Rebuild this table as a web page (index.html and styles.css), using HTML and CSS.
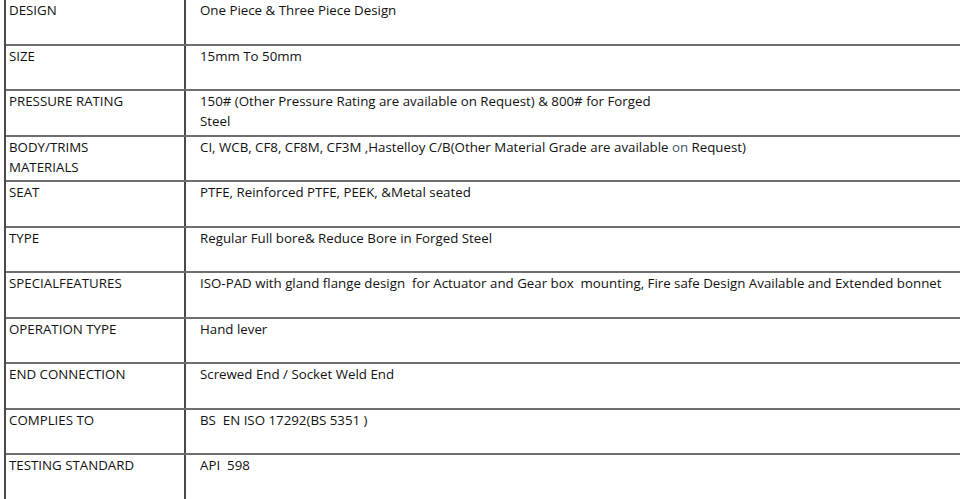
FILE: index.html
```html
<!DOCTYPE html>
<html>
<head>
<meta charset="utf-8">
<link rel="stylesheet" href="styles.css">
</head>
<body>
<div class="spec">
  <div class="row"><div class="key">DESIGN</div><div class="val">One Piece &amp; Three Piece Design</div></div>
  <div class="row"><div class="key">SIZE</div><div class="val">15mm To 50mm</div></div>
  <div class="row"><div class="key">PRESSURE RATING</div><div class="val">150# (Other Pressure Rating are available on Request) &amp; 800# for Forged<br>Steel</div></div>
  <div class="row"><div class="key">BODY/TRIMS<br>MATERIALS</div><div class="val">CI, WCB, CF8, CF8M, CF3M ,Hastelloy C/B(Other Material Grade are available <span class="muted">on</span> Request)</div></div>
  <div class="row"><div class="key">SEAT</div><div class="val">PTFE, Reinforced PTFE, PEEK, &amp;Metal seated</div></div>
  <div class="row"><div class="key">TYPE</div><div class="val">Regular Full bore&amp; Reduce Bore in Forged Steel</div></div>
  <div class="row"><div class="key">SPECIALFEATURES</div><div class="val">ISO-PAD with gland flange design&nbsp; for Actuator and Gear box&nbsp; mounting, Fire safe Design Available and Extended bonnet</div></div>
  <div class="row"><div class="key">OPERATION TYPE</div><div class="val">Hand lever</div></div>
  <div class="row"><div class="key">END CONNECTION</div><div class="val">Screwed End / Socket Weld End</div></div>
  <div class="row"><div class="key">COMPLIES TO</div><div class="val">BS&nbsp; EN ISO 17292(BS 5351 )</div></div>
  <div class="row"><div class="key">TESTING STANDARD</div><div class="val">API&nbsp; 598</div></div>
</div>
</body>
</html>
```

FILE: styles.css
```css
html, body {
  margin: 0;
  padding: 0;
  background: #ffffff;
  overflow: hidden;
}
body {
  font-family: "Open Sans", "Liberation Sans", sans-serif;
  font-size: 13.3px;
  color: #111111;
}
.spec {
  margin-top: 0;
  margin-left: 4px;
  width: 1000px;
  border-left: 2px solid #4a4a4a;
}
.row {
  display: grid;
  grid-template-columns: 180px 1fr;
  height: 45.5px;
  box-sizing: border-box;
  border-bottom: 2px solid #6e6e6e;
}
.key {
  border-right: 2px solid #4a4a4a;
  padding: 0 0 0 3px;
  line-height: 20px;
  white-space: nowrap;
}
.val {
  padding: 0 0 0 14px;
  line-height: 20px;
  white-space: nowrap;
}
.muted {
  color: #44546a;
}
```
